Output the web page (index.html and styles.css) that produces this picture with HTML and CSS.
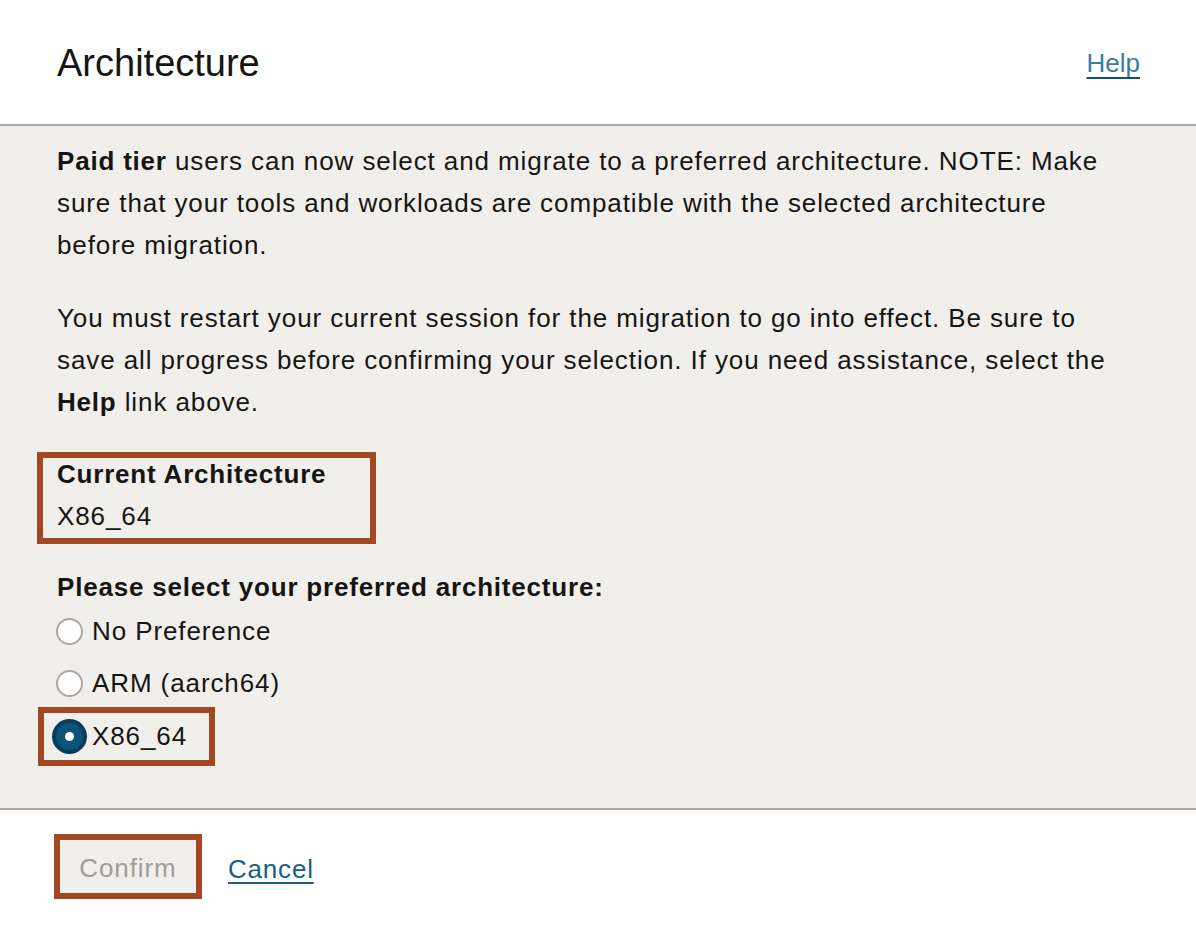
FILE: index.html
```html
<!DOCTYPE html>
<html lang="en">
<head>
<meta charset="utf-8">
<title>Architecture</title>
<link rel="stylesheet" href="styles.css">
</head>
<body>
<div class="dialog">
  <header class="dialog-header">
    <h1 class="dialog-title">Architecture</h1>
    <a class="help-link" href="#">Help</a>
  </header>
  <main class="dialog-body">
    <p class="para"><strong>Paid tier</strong> users can now select and migrate to a preferred architecture. NOTE: Make sure that your tools and workloads are compatible with the selected architecture before migration.</p>
    <p class="para">You must restart your current session for the migration to go into effect. Be sure to save all progress before confirming your selection. If you need assistance, select the <strong>Help</strong> link above.</p>
    <div class="current-box">
      <div class="current-label">Current Architecture</div>
      <div class="current-value">X86_64</div>
    </div>
    <div class="select-label">Please select your preferred architecture:</div>
    <div class="radio-list">
      <div class="radio-row row-1"><span class="radio"></span><span class="radio-text">No Preference</span></div>
      <div class="radio-row row-2"><span class="radio"></span><span class="radio-text">ARM (aarch64)</span></div>
      <div class="radio-row row-3 highlight-row"><span class="radio checked"></span><span class="radio-text">X86_64</span></div>
    </div>
  </main>
  <footer class="dialog-footer">
    <button class="confirm-btn" type="button">Confirm</button>
    <a class="cancel-link" href="#">Cancel</a>
  </footer>
</div>
</body>
</html>
```

FILE: styles.css
```css
* { box-sizing: border-box; }
html, body { margin: 0; padding: 0; }
body {
  font-family: "Liberation Sans", Arial, Helvetica, sans-serif;
  color: #161513;
  background: #ffffff;
  width: 1196px;
  height: 926px;
  overflow: hidden;
}
.dialog { display: flex; flex-direction: column; height: 926px; }

.dialog-header {
  height: 126px;
  border-bottom: 2px solid #aea8a2;
  display: flex;
  align-items: center;
  justify-content: space-between;
  padding: 2px 56px 0 57px;
  background: #fff;
}
.dialog-title {
  margin: 0;
  font-size: 38px;
  font-weight: normal;
  line-height: 44px;
  color: #161513;
}
.help-link {
  font-size: 26px;
  color: #3d7aa0;
  text-decoration: underline;
  text-decoration-color: #174f72;
  text-underline-offset: 5px;
  line-height: 30px;
}

.dialog-body {
  background: #f1efec;
  border-bottom: 2px solid #aea8a2;
  padding: 14px 76px 42px 57px;
  font-size: 26px;
  line-height: 42px;
  letter-spacing: 0.9px;
}
.para { margin: 0 0 31px 0; }
.para strong, .current-label, .select-label { font-weight: bold; letter-spacing: 0.8px; }

.current-box {
  width: 339px;
  border: 6px solid #a24923;
  margin: -2px 0 0 -20px;
  padding: 0 0 0 14px;
  height: 92px;
}
.current-label { line-height: 32px; }
.current-value { line-height: 44px; padding-top: 4px; }

.select-label { margin-top: 22px; line-height: 42px; }

.radio-list { display: flex; flex-direction: column; align-items: flex-start; }
.radio-row {
  display: flex;
  align-items: center;
  height: 42px;
}
.row-1 { margin-top: 2px; }
.row-2 { margin-top: 10px; }
.row-3 { margin-top: 3px; }
.highlight-row {
  width: 177px;
  height: 59px;
  border: 6px solid #a24923;
  margin-left: -19px;
  padding: 2px 0 3px 13px;
}
.radio {
  width: 27px;
  height: 27px;
  border-radius: 50%;
  background: #fff;
  border: 2px solid #aca6a1;
  margin-left: -1px;
  margin-right: 9px;
  flex: none;
  position: relative;
}
.radio.checked {
  background: #0c5279;
  border: none;
  box-shadow: 0 0 0 4px #0a3d5b;
}
.radio.checked::after {
  content: "";
  position: absolute;
  left: 50%;
  top: 50%;
  width: 9px;
  height: 9px;
  margin: -4.5px 0 0 -4.5px;
  border-radius: 50%;
  background: #fff;
}
.radio-text { line-height: 42px; }

.dialog-footer {
  flex: 1;
  display: flex;
  align-items: flex-start;
  padding: 24px 0 0 54px;
  background: #fff;
}
.confirm-btn {
  width: 148px;
  height: 65px;
  border: 6px solid #a24923;
  background: #f1efec;
  color: #a29c97;
  font-family: "Liberation Sans", Arial, Helvetica, sans-serif;
  font-size: 26px;
  letter-spacing: 0.9px;
  padding: 3px 0 0 0;
  margin: 0;
}
.cancel-link {
  margin-left: 26px;
  font-size: 26px;
  letter-spacing: 0.8px;
  line-height: 65px;
  padding-top: 3px;
  color: #195e86;
  text-decoration: underline;
  text-underline-offset: 4px;
}
```
